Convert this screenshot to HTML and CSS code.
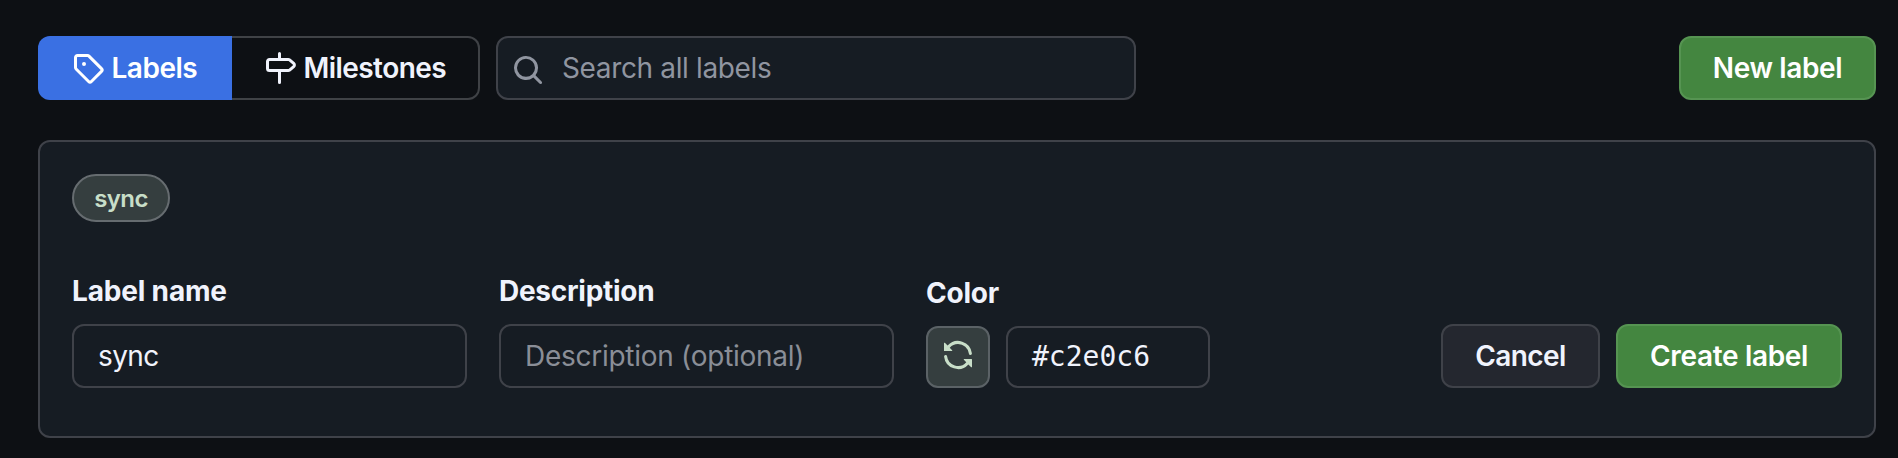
FILE: index.html
```html
<!DOCTYPE html>
<html lang="en">
<head>
<meta charset="utf-8">
<title>Labels</title>
<link rel="stylesheet" href="styles.css">
</head>
<body>
<header class="toolbar">
  <nav class="tabs">
    <a class="tab tab-active"><svg class="icon" viewBox="0 0 16 16"><path d="M1 7.775V2.75C1 1.784 1.784 1 2.75 1h5.025c.464 0 .91.184 1.238.513l6.25 6.25a1.75 1.75 0 0 1 0 2.474l-5.026 5.026a1.75 1.75 0 0 1-2.474 0l-6.25-6.25A1.752 1.752 0 0 1 1 7.775Zm1.5 0c0 .066.026.13.073.177l6.25 6.25a.25.25 0 0 0 .354 0l5.025-5.025a.25.25 0 0 0 0-.354l-6.25-6.25a.25.25 0 0 0-.177-.073H2.75a.25.25 0 0 0-.25.25ZM6 5a1 1 0 1 1 0 2 1 1 0 0 1 0-2Z"/></svg><span class="t-labels">Labels</span></a>
    <a class="tab tab-rest"><svg class="icon" viewBox="0 0 16 16"><path d="M7.75 0a.75.75 0 0 1 .75.75V3h3.634c.414 0 .814.147 1.13.414l2.07 1.75a1.75 1.75 0 0 1 0 2.672l-2.07 1.75a1.75 1.75 0 0 1-1.13.414H8.5v5.25a.75.75 0 0 1-1.5 0V10H2.75A1.75 1.75 0 0 1 1 8.25v-3.5C1 3.784 1.784 3 2.75 3H7V.75A.75.75 0 0 1 7.75 0Zm4.384 8.5a.25.25 0 0 0 .161-.06l2.07-1.75a.248.248 0 0 0 0-.38l-2.07-1.75a.25.25 0 0 0-.161-.06H2.75a.25.25 0 0 0-.25.25v3.5c0 .138.112.25.25.25h9.384Z"/></svg><span class="t-milestones">Milestones</span></a>
  </nav>
  <div class="search"><svg class="icon" viewBox="0 0 16 16"><path d="M10.68 11.74a6 6 0 0 1-7.922-8.982 6 6 0 0 1 8.982 7.922l3.04 3.04a.749.749 0 0 1-.326 1.275.749.749 0 0 1-.734-.215ZM11.5 7a4.499 4.499 0 1 0-8.997 0A4.499 4.499 0 0 0 11.5 7Z"/></svg><span class="t-search">Search all labels</span></div>
  <button class="btn btn-primary btn-new"><span class="t-new">New label</span></button>
</header>
<main class="panel">
  <div class="pill"><span class="t-pill">sync</span></div>
  <div class="form">
    <div class="field"><div class="caption"><span class="t-name">Label name</span></div><div class="input"><span class="t-sync">sync</span></div></div>
    <div class="field"><div class="caption"><span class="t-desc">Description</span></div><div class="input placeholder"><span class="t-optional">Description (optional)</span></div></div>
    <div class="field field-color"><div class="caption"><span class="t-color">Color</span></div>
      <div class="color-row">
        <button class="swatch"><svg class="icon" viewBox="0 0 16 16"><path d="M1.705 8.005a.75.75 0 0 1 .834.656 5.5 5.5 0 0 0 9.592 2.97l-1.204-1.204a.25.25 0 0 1 .177-.427h3.646a.25.25 0 0 1 .25.25v3.646a.25.25 0 0 1-.427.177l-1.38-1.38A7.002 7.002 0 0 1 1.05 8.84a.75.75 0 0 1 .656-.834ZM8 2.5a5.487 5.487 0 0 0-4.131 1.869l1.204 1.204A.25.25 0 0 1 4.896 6H1.25A.25.25 0 0 1 1 5.75V2.104a.25.25 0 0 1 .427-.177l1.38 1.38A7.002 7.002 0 0 1 14.95 7.16a.75.75 0 0 1-1.49.178A5.5 5.5 0 0 0 8 2.5Z"/></svg></button>
        <div class="input hex"><span class="t-hex">#c2e0c6</span></div>
      </div>
    </div>
    <div class="actions"><button class="btn btn-cancel"><span class="t-cancel">Cancel</span></button><button class="btn btn-primary btn-create"><span class="t-create">Create label</span></button></div>
  </div>
</main>
</body>
</html>
```

FILE: styles.css
```css
* { box-sizing: border-box; }
body {
  margin: 0;
  height: 458px;
  padding: 36px 22px 0 38px;
  overflow: hidden;
  background: #0d1014;
  color: #f0f3fc;
  font: 400 28px/40px Inter, "Liberation Sans", sans-serif;
  white-space: nowrap;
}
.icon { width: 32px; height: 32px; flex: none; fill: currentColor; }
.toolbar { display: flex; height: 64px; }
.tabs { display: flex; width: 442px; font-weight: 580; }
.tab { display: flex; align-items: center; gap: 7.5px; height: 64px; }
.tab-active { width: 194px; padding-left: 34px; background: #3a70e3; color: #fff; border-radius: 12px 0 0 12px; }
.tab-rest { width: 248px; padding-left: 32px; border: 2px solid #3f4246; border-left: 0; border-radius: 0 12px 12px 0; }
.search { display: flex; align-items: center; width: 640px; margin-left: 16px; padding-left: 14px; gap: 18px; border: 2px solid #3f4249; border-radius: 12px; background: #161c23; color: #9095a0; }
.search .icon { margin-top: 4px; }
.btn { display: flex; align-items: center; justify-content: center; height: 64px; padding: 0; border: 2px solid #3f4249; border-radius: 12px; font: inherit; font-weight: 580; color: #f0f3fc; }
.btn-primary { background: #448640; border-color: #569452; color: #fff; }
.btn-new { width: 197px; margin-left: auto; }
.panel { height: 298px; margin-top: 40px; padding: 32px; border: 2px solid #3f4249; border-radius: 12px; background: #161c23; }
.pill { display: flex; align-items: center; justify-content: center; width: 98px; height: 48px; padding-top: 2px; border: 2px solid #666c70; border-radius: 24px; background: #353e3f; color: #c8dec8; font-size: 24px; font-weight: 580; }
.form { display: flex; align-items: flex-end; height: 166px; }
.field { width: 395px; margin-right: 32px; }
.caption { font-weight: 680; height: 40px; margin-bottom: 13px; }
.input { display: flex; align-items: center; height: 64px; padding-left: 24px; border: 2px solid #3f4249; border-radius: 12px; }
.placeholder { color: #8a8e97; }
.field-color { width: 284px; margin: 0; }
.color-row { display: flex; gap: 16px; height: 62px; }
.swatch { display: flex; align-items: center; justify-content: center; width: 64px; height: 62px; padding: 0 0 4px; border: 2px solid #5b6266; border-radius: 12px; background: #353e3f; color: #c8dec8; }
.hex { width: 204px; height: 62px; font-family: "DejaVu Sans Mono", monospace; }
.actions { display: flex; gap: 16px; margin-left: auto; }
.btn-cancel { width: 159px; background: #24272f; }
.btn-create { width: 226px; }

.t-labels { letter-spacing: -0.48px; }
.t-milestones { letter-spacing: -0.56px; }
.t-search { letter-spacing: -0.36px; }
.t-new { letter-spacing: -0.38px; }
.t-pill { letter-spacing: -0.6px; }
.t-name { letter-spacing: -0.17px; }
.t-sync { letter-spacing: -0.6px; }
.t-desc { letter-spacing: -0.27px; }
.t-optional { letter-spacing: -0.27px; }
.t-color { letter-spacing: -0.21px; }
.t-cancel { letter-spacing: -0.56px; }
.t-create { letter-spacing: -0.33px; }
```
